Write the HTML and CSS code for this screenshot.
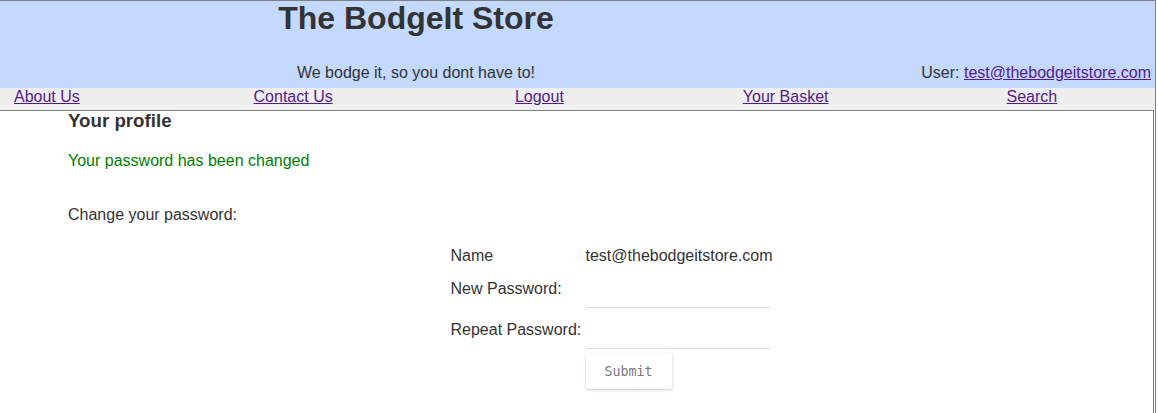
FILE: index.html
```html
<!DOCTYPE html>
<html>
<head>
<meta charset="utf-8">
<title>The BodgeIt Store</title>
<link rel="stylesheet" href="styles.css">
</head>
<body>
<div class="page">
  <header class="header">
    <h1 class="title">The BodgeIt Store</h1>
    <div class="tagline">We bodge it, so you dont have to!</div>
    <div class="user">User: <a href="#">test@thebodgeitstore.com</a></div>
  </header>
  <nav class="nav">
    <a class="nav-first" href="#">About Us</a>
    <a href="#">Contact Us</a>
    <a href="#">Logout</a>
    <a href="#">Your Basket</a>
    <a href="#">Search</a>
  </nav>
  <main class="content">
    <h3 class="heading">Your profile</h3>
    <p class="notice">Your password has been changed</p>
    <div class="intro">Change your password:</div>
    <form class="form">
      <div class="label label-name">Name</div>
      <div class="value">test@thebodgeitstore.com</div>
      <label class="label" for="password1">New Password:</label>
      <input class="field" id="password1" type="password">
      <label class="label" for="password2">Repeat Password:</label>
      <input class="field" id="password2" type="password">
      <div class="spacer"></div>
      <div class="actions"><button class="submit" type="button">Submit</button></div>
    </form>
  </main>
</div>
</body>
</html>
```

FILE: styles.css
```css
html, body {
  margin: 0;
  padding: 0;
  background: #ffffff;
}

body {
  font-family: "Liberation Sans", Arial, sans-serif;
  font-size: 16px;
  color: #333333;
}

a {
  color: #551a8b;
  text-decoration: underline;
}

.page {
  width: 1155px;
  height: 412px;
  border-top: 1px solid #808080;
  border-right: 1px solid #808080;
  display: flex;
  flex-direction: column;
}

.header {
  height: 87px;
  background: #c3d9ff;
  display: grid;
  grid-template-columns: 832px 1fr;
  grid-template-rows: auto 1fr;
}

.title {
  grid-column: 1;
  margin: 0;
  text-align: center;
  font-size: 32px;
  line-height: 34px;
  font-weight: bold;
  color: #333333;
}

.tagline {
  grid-column: 1;
  grid-row: 2;
  align-self: end;
  text-align: center;
  line-height: 18px;
  padding-bottom: 6px;
}

.user {
  grid-column: 2;
  grid-row: 2;
  align-self: end;
  text-align: right;
  line-height: 18px;
  padding-bottom: 6px;
  padding-right: 4px;
}

.nav {
  box-sizing: border-box;
  height: 22px;
  padding-bottom: 5px;
  background: #eeeeee;
  display: grid;
  grid-template-columns: 170px repeat(4, 1fr);
  align-items: center;
  justify-items: center;
  line-height: 18px;
}

.nav .nav-first {
  justify-self: start;
  padding-left: 14px;
}

.content {
  flex: 1;
  margin-right: 1px;
  border-top: 1px solid #808080;
  border-right: 1px solid #808080;
  padding-left: 68px;
}

.heading {
  margin: 0;
  font-size: 18.72px;
  line-height: 19px;
  font-weight: bold;
}

.notice {
  margin: 22px 0 0;
  line-height: 18px;
  color: #008000;
}

.intro {
  margin-top: 36px;
  line-height: 18px;
}

.form {
  margin-top: 19px;
  display: grid;
  grid-template-columns: 135px 185px;
  grid-template-rows: 25px 38px 39px auto;
  row-gap: 2px;
  justify-content: center;
}

.label {
  align-self: center;
  white-space: nowrap;
  line-height: 18px;
}

.value {
  align-self: center;
  white-space: nowrap;
  line-height: 18px;
}

.field {
  box-sizing: border-box;
  width: 185px;
  height: 100%;
  margin: 0;
  padding: 0;
  border: none;
  border-bottom: 1px solid #dddddd;
  background: transparent;
  outline: none;
}

.actions {
  padding-top: 2px;
}

.submit {
  box-sizing: border-box;
  width: 86px;
  height: 36px;
  border: none;
  border-radius: 2px;
  background: #ffffff;
  box-shadow: 0 1px 3px rgba(0, 0, 0, 0.22);
  font-family: "DejaVu Sans Mono", monospace;
  font-size: 13.33px;
  color: #7a7a7a;
  padding: 0;
}
```
